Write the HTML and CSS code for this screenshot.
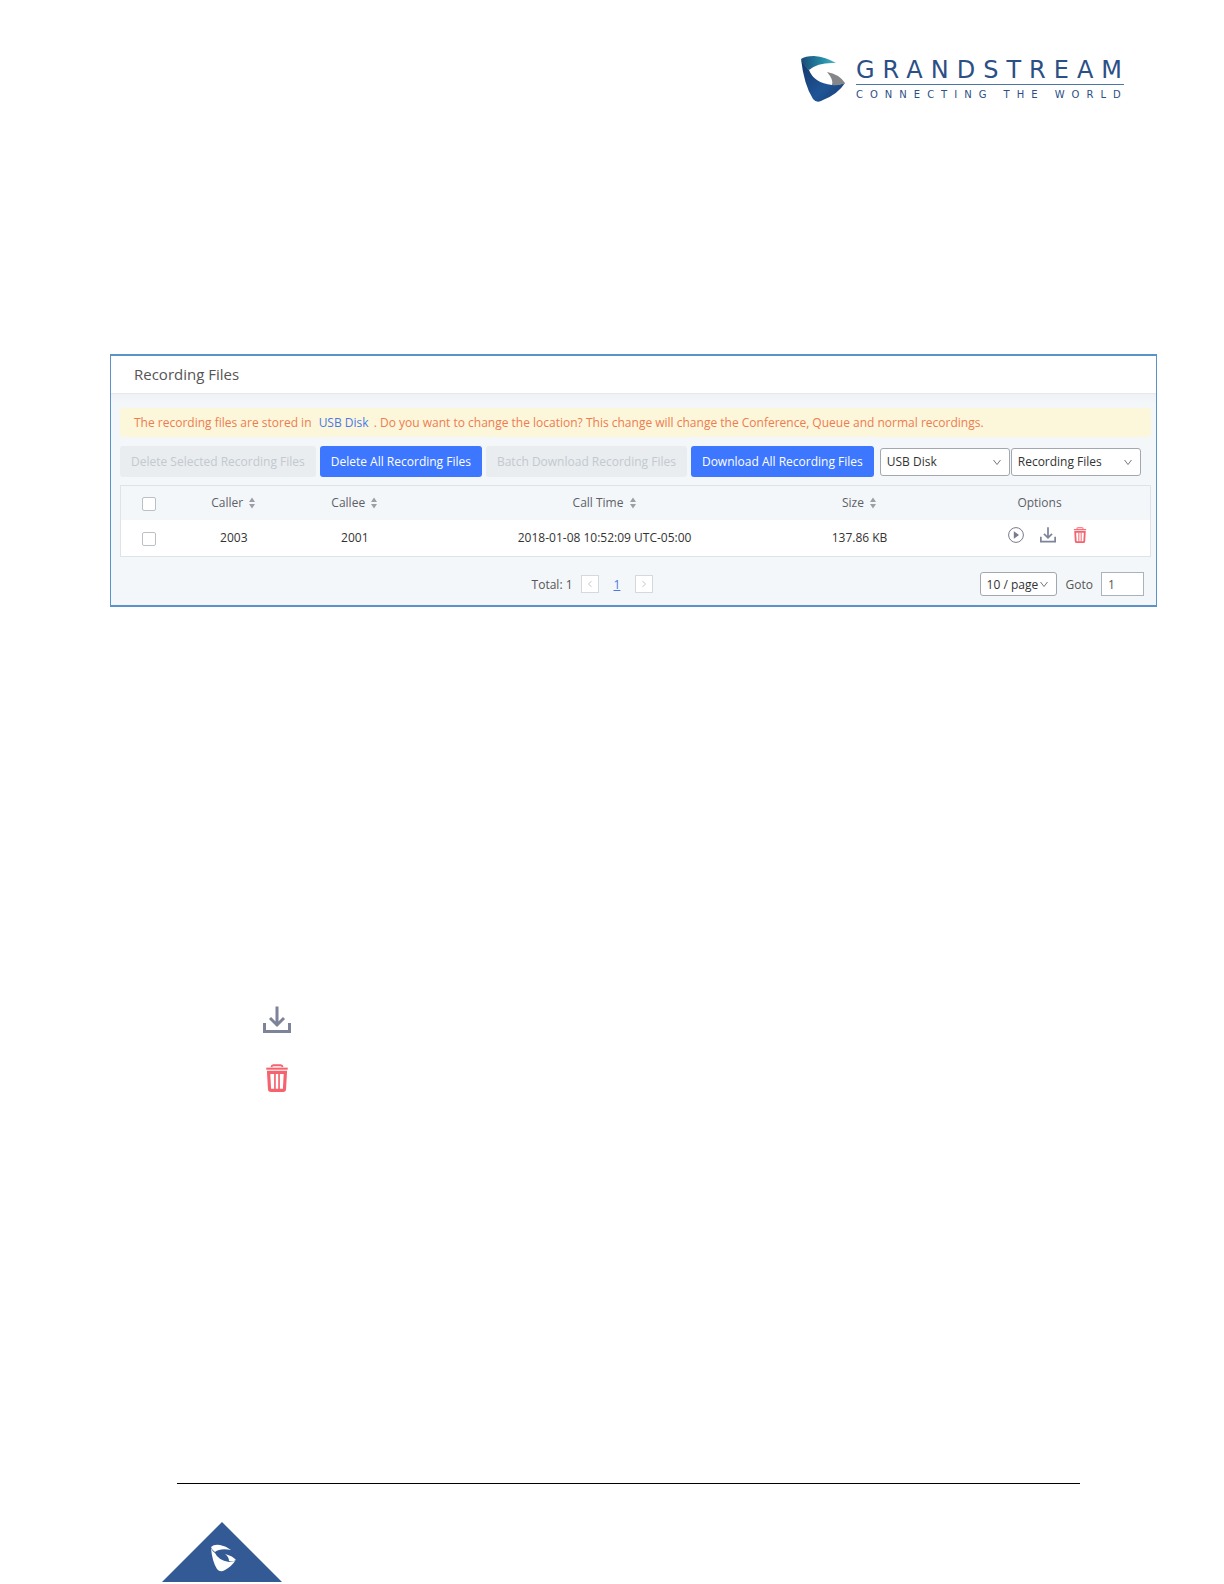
FILE: index.html
```
<!DOCTYPE html>
<html lang="en">
<head>
  <meta charset="UTF-8" />
  <meta name="viewport" content="width=device-width, initial-scale=1" />
  <title>Recording Files</title>
  <link rel="stylesheet" href="styles.css">
</head>
<body>

  <!-- Shared icons -->
  <svg class="sprite" aria-hidden="true">
    <symbol id="icon-play" viewBox="0 0 16 16">
      <circle cx="8" cy="8" r="7.4" fill="none" stroke="#777c8b" stroke-width="1" />
      <path d="M5.8 4.2L11 8L5.8 11.8Z" fill="#777c8b" />
    </symbol>
    <symbol id="icon-download" viewBox="0 0 28 28">
      <path d="M1.5 17V25.5H26.5V17" fill="none" stroke="#7d8499" stroke-width="3" />
      <path d="M14 0.5V18M7 12L14 19L21 12" fill="none" stroke="#7d8499" stroke-width="3" />
    </symbol>
    <symbol id="icon-trash" viewBox="0 0 24 30">
      <path d="M6 3.4Q6.3 1.4 8 1.4H16Q17.7 1.4 18 3.4" fill="none" stroke="#f4636e" stroke-width="2" />
      <path d="M0.5 5H23.5" stroke="#f4636e" stroke-width="2.2" />
      <path d="M3 9H21L20 27Q19.9 28.3 18.5 28.3H5.5Q4.1 28.3 4 27Z" fill="#fff" stroke="#f4636e" stroke-width="3.4" />
      <path d="M9.8 10V27M14.2 10V27" stroke="#f4636e" stroke-width="1.8" />
    </symbol>
    <symbol id="icon-down" viewBox="0 0 10 10">
      <path d="M1.5 3L5 7.5L8.5 3" fill="none" stroke="#777" stroke-width="1" />
    </symbol>
    <symbol id="icon-sort" viewBox="0 0 8 12">
      <path d="M4 0.5L7 5H1ZM4 11.5L1 7H7Z" fill="#9c9fa4" />
    </symbol>
  </svg>

  <header class="page-header">
    <div class="logo">
      <svg class="logo-mark" viewBox="0 0 44 46" aria-hidden="true">
        <defs>
          <linearGradient id="teal" x1="0" y1="0" x2="1" y2="0">
            <stop offset="0" stop-color="#1b4a78" />
            <stop offset="0.6" stop-color="#2589a5" />
            <stop offset="1" stop-color="#4bb6c8" />
          </linearGradient>
          <linearGradient id="blue" x1="0" y1="0" x2="1" y2="1">
            <stop offset="0" stop-color="#153566" />
            <stop offset="0.6" stop-color="#1f5596" />
            <stop offset="1" stop-color="#173b70" />
          </linearGradient>
        </defs>
        <path d="M0 3Q4 0 13 0Q25 1 35 7Q17 6 8 14Q2 10 0 3Z" fill="url(#teal)" />
        <path d="M0 3Q3 10 8 14Q13 27 31 29Q38 29 44 27Q37 38 22 44Q16 48 12 43Q3 29 0 3Z" fill="url(#blue)" />
        <path d="M26 16Q38 18 44 27Q38 30 31 29Q33 24 26 16Z" fill="#85868a" />
      </svg>
      <div class="logo-text">
        <span class="logo-name">GRANDSTREAM</span>
        <span class="logo-tagline">CONNECTING THE WORLD</span>
      </div>
    </div>
  </header>

  <main>
    <section class="panel">
      <h1 class="panel-title">Recording Files</h1>

      <div class="panel-body">
        <p class="notice">The recording files are stored in <a href="#">USB Disk</a> . Do you want to change the location? This change will change the Conference, Queue and normal recordings.</p>

        <div class="toolbar">
          <button type="button" class="btn" disabled>Delete Selected Recording Files</button>
          <button type="button" class="btn">Delete All Recording Files</button>
          <button type="button" class="btn" disabled>Batch Download Recording Files</button>
          <button type="button" class="btn">Download All Recording Files</button>
          <div class="filters">
            <div class="select">
              <select aria-label="Storage location">
                <option>USB Disk</option>
              </select>
              <svg class="arrow" aria-hidden="true"><use href="#icon-down" /></svg>
            </div>
            <div class="select">
              <select aria-label="File type">
                <option>Recording Files</option>
              </select>
              <svg class="arrow" aria-hidden="true"><use href="#icon-down" /></svg>
            </div>
          </div>
        </div>

        <table class="files">
          <colgroup>
            <col class="col-check"><col class="col-caller"><col class="col-callee"><col class="col-time"><col class="col-size"><col class="col-options">
          </colgroup>
          <thead>
            <tr>
              <th><input type="checkbox" aria-label="Select all" /></th>
              <th>Caller <svg class="sort" aria-hidden="true"><use href="#icon-sort" /></svg></th>
              <th>Callee <svg class="sort" aria-hidden="true"><use href="#icon-sort" /></svg></th>
              <th>Call Time <svg class="sort" aria-hidden="true"><use href="#icon-sort" /></svg></th>
              <th>Size <svg class="sort" aria-hidden="true"><use href="#icon-sort" /></svg></th>
              <th>Options</th>
            </tr>
          </thead>
          <tbody>
            <tr>
              <td><input type="checkbox" aria-label="Select recording" /></td>
              <td>2003</td>
              <td>2001</td>
              <td>2018-01-08 10:52:09 UTC-05:00</td>
              <td>137.86 KB</td>
              <td>
                <div class="options">
                  <button type="button" aria-label="Play"><svg><use href="#icon-play" /></svg></button>
                  <button type="button" aria-label="Download"><svg><use href="#icon-download" /></svg></button>
                  <button type="button" aria-label="Delete"><svg><use href="#icon-trash" /></svg></button>
                </div>
              </td>
            </tr>
          </tbody>
        </table>

        <div class="pager">
          <div class="pages">
            <span>Total: 1</span>
            <button type="button" class="step" aria-label="Previous page" disabled><svg viewBox="0 0 8 8"><path d="M5.5 1L2.5 4L5.5 7" /></svg></button>
            <a href="#">1</a>
            <button type="button" class="step" aria-label="Next page" disabled><svg viewBox="0 0 8 8"><path d="M2.5 1L5.5 4L2.5 7" /></svg></button>
          </div>
          <div class="jump">
            <div class="select select-small">
              <select aria-label="Rows per page">
                <option>10 / page</option>
              </select>
              <svg class="arrow" aria-hidden="true"><use href="#icon-down" /></svg>
            </div>
            <label for="goto">Goto</label>
            <input type="text" id="goto" value="1" />
          </div>
        </div>
      </div>
    </section>

    <div class="legend">
      <svg role="img" aria-label="Download"><use href="#icon-download" /></svg>
      <svg role="img" aria-label="Delete"><use href="#icon-trash" /></svg>
    </div>
  </main>

  <footer class="page-footer">
    <svg class="badge" viewBox="0 0 120 60" aria-hidden="true">
      <path d="M60 0L120 60H0Z" fill="#335a95" />
      <path d="M49 25Q52 22 58 23Q64 24 69 28Q58 26 53 30Q50 28 49 25Z" fill="#fff" />
      <path d="M49 26Q50 29 53 31Q56 38 67 40L73 39Q70 44 63 48Q58 51 55 47Q50 39 49 26Z" fill="#fff" />
      <path d="M63 32Q71 34 74 38Q71 40 67 39Q67 35 63 32Z" fill="#fff" />
    </svg>
  </footer>

</body>
</html>
```
FILE: styles.css
```
* {
  box-sizing: border-box;
}
body {
  font-family: "Open Sans", "Noto Sans", sans-serif;
  font-size: 12px;
  color: #333;
  background: #fff;
  margin: 0;
  display: flex;
  flex-direction: column;
  min-height: 100vh;
}
button, input, select {
  font: inherit;
  color: inherit;
}
a {
  color: #4a77e8;
}
.sprite {
  display: none;
}

/* Header */
.page-header {
  display: flex;
  justify-content: flex-end;
  padding: 56px 96px 0 0;
}
.logo {
  display: flex;
  gap: 11px;
}
.logo-mark {
  width: 44px;
  height: 46px;
}
.logo-text {
  display: flex;
  flex-direction: column;
  width: 272px;
  color: #2c4f86;
}
.logo-name {
  font-family: "DejaVu Sans", sans-serif;
  font-size: 24px;
  line-height: 28px;
  letter-spacing: 8px;
  white-space: nowrap;
}
.logo-name::after {
  content: "";
  display: block;
  width: 268px;
  border-top: 1px solid #4a76a8;
}
.logo-tagline {
  font-family: "DejaVu Sans", sans-serif;
  font-size: 10px;
  line-height: 20px;
  letter-spacing: 7px;
  white-space: nowrap;
}

/* Recording files panel */
.panel {
  margin: 249px 67px 0 110px;
  border: 1px solid #5b92c7;
  border-width: 2px 1px;
  background: #f3f7fa;
}
.panel-title {
  margin: 0;
  padding: 0 23px;
  font-size: 15px;
  font-weight: 400;
  line-height: 37px;
  color: #555;
  background: #fff;
  border-bottom: 1px solid #e6e9ec;
}
.panel-body {
  padding: 14px 5px 9px 9px;
  background: linear-gradient(#eef2f6, #f3f7fa 10px);
}
.notice {
  margin: 0 0 9px;
  padding: 0 14px;
  line-height: 29px;
  color: #ee7c50;
  background: #fcf7da;
  border-radius: 3px;
}
.notice a {
  margin: 0 2px 0 4px;
  text-decoration: none;
}
.toolbar {
  display: flex;
  align-items: center;
  gap: 4px;
  margin-bottom: 8px;
}
.btn {
  height: 31px;
  padding: 0 11px;
  border: none;
  border-radius: 3px;
  color: #fff;
  background: #3d77ff;
  white-space: nowrap;
}
.btn:disabled {
  color: #c3c9ce;
  background: #e9edf0;
}
.filters {
  display: flex;
  gap: 1px;
  margin-left: 2px;
}
.select {
  display: grid;
  align-items: center;
  width: 130px;
}
.select select, .select .arrow {
  grid-area: 1 / 1;
}
.select select {
  appearance: none;
  width: 100%;
  height: 28px;
  padding: 0 6px;
  border: 1px solid #a3a8b0;
  border-radius: 3px;
  background: #fff;
}
.select .arrow {
  justify-self: end;
  width: 10px;
  height: 10px;
  margin-right: 8px;
  pointer-events: none;
}

/* Table */
.files {
  width: 100%;
  table-layout: fixed;
  border-collapse: collapse;
  border: 1px solid #dfe3e7;
  background: #fff;
  text-align: center;
}
.files th {
  height: 34px;
  padding: 0;
  font-weight: 400;
  color: #5d6166;
  background: #f3f7fa;
}
.files td {
  height: 37px;
  padding: 0;
}
.col-check { width: 5.5%; }
.col-caller { width: 11%; }
.col-callee { width: 12.5%; }
.col-time { width: 36%; }
.col-size { width: 13.5%; }
.col-options { width: 21.5%; }
.files input {
  appearance: none;
  width: 14px;
  height: 14px;
  margin: 0;
  border: 1px solid #bcc0c5;
  border-radius: 2px;
  background: #fff;
  vertical-align: middle;
}
.sort {
  width: 8px;
  height: 12px;
  margin-left: 2px;
  vertical-align: -2px;
}
.options {
  display: flex;
  justify-content: center;
  gap: 16px;
  padding-left: 16px;
}
.options button {
  width: 16px;
  height: 22px;
  padding: 0 0 6px;
  border: none;
  background: none;
}
.options svg {
  display: block;
  width: 16px;
  height: 16px;
}

/* Pagination */
.pager {
  display: grid;
  grid-template-columns: 1fr auto 1fr;
  align-items: center;
  padding-top: 15px;
}
.pages {
  grid-column: 2;
  display: flex;
  align-items: center;
  gap: 8px;
  padding-right: 86px;
  color: #555;
}
.pages a {
  padding: 0 7px;
  font-size: 12px;
}
.step {
  display: flex;
  align-items: center;
  justify-content: center;
  width: 18px;
  height: 18px;
  padding: 0;
  border: 1px solid #d5d8dc;
  background: #fff;
}
.step svg {
  width: 8px;
  height: 8px;
  fill: none;
  stroke: #c5c8cc;
}
.jump {
  display: flex;
  align-items: center;
  justify-content: flex-end;
  padding-right: 7px;
  color: #555;
}
.select-small {
  width: 77px;
  margin-right: 9px;
  color: #333;
}
.select-small select {
  height: 24px;
}
.jump input {
  width: 43px;
  height: 24px;
  margin-left: 8px;
  padding: 0 6px;
  border: 1px solid #a9b3c0;
  background: #fff;
}

/* Icon legend */
.legend {
  display: flex;
  flex-direction: column;
  align-items: center;
  gap: 30px;
  width: 30px;
  margin: 399px 0 0 262px;
}
.legend svg {
  width: 28px;
  height: 28px;
}

/* Footer */
.page-footer {
  margin: auto 144px 0 177px;
  padding-bottom: 2px;
  border-top: 1px solid #000;
}
.badge {
  display: block;
  width: 120px;
  height: 60px;
  margin: 38px 0 0 -15px;
}
```
